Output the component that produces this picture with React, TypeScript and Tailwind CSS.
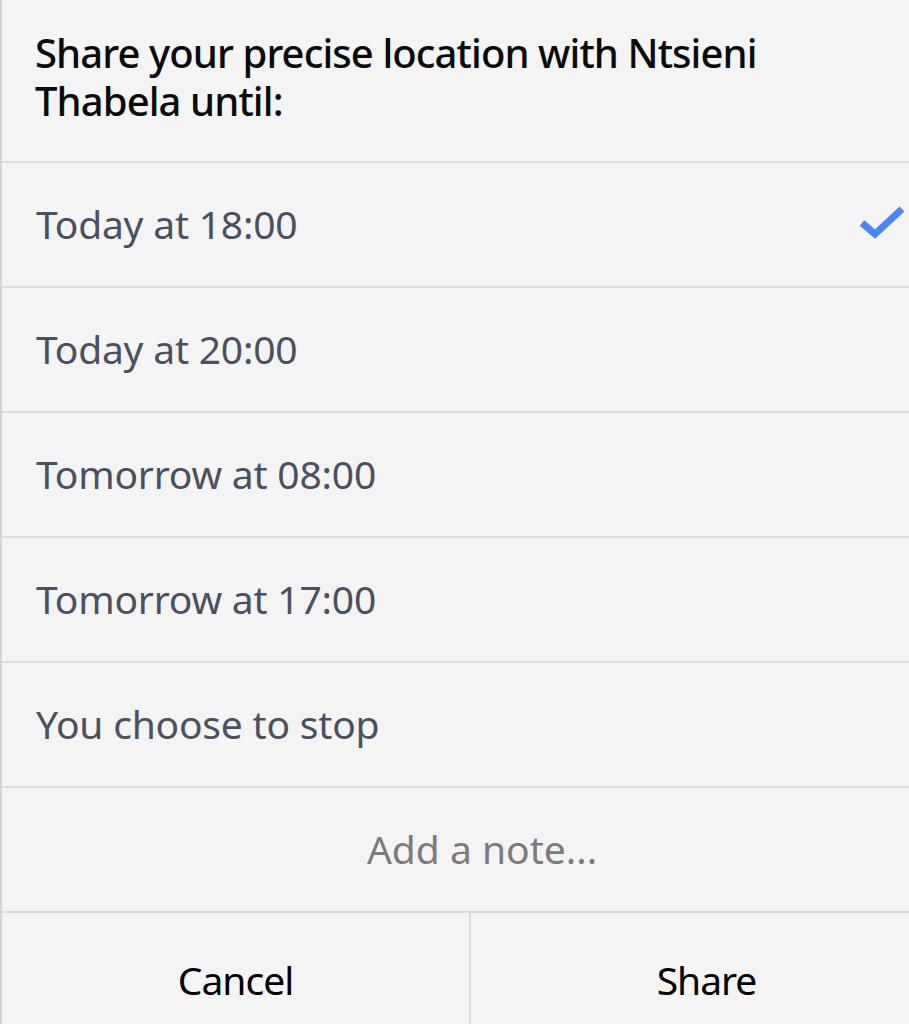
const options = [
  "Today at 18:00",
  "Today at 20:00",
  "Tomorrow at 08:00",
  "Tomorrow at 17:00",
  "You choose to stop",
];

export default function App() {
  const selected = 0;
  return (
    <div className="w-[909px] h-[1024px] overflow-hidden bg-[#f4f4f4]">
      <div
        className="w-[942px] h-[1024px] flex flex-col border-l-2 border-[#d4d4d4] bg-[#f4f4f4]"
        style={{ fontFamily: '"Noto Sans", "Open Sans", sans-serif' }}
      >
        <div className="h-[161px] px-[33px] pt-[29px]">
          <h1 className="text-[40px] leading-[48px] font-medium text-[#0b0b0b] tracking-[-0.9px]">
            Share your precise location with Ntsieni
            <br />
            Thabela until:
          </h1>
        </div>
        {options.map((opt, i) => (
          <div
            key={opt}
            className="h-[125px] border-t-2 border-[#dcdcdc] flex items-center justify-between pl-[34px] pr-[36px]"
          >
            <span className="text-[39px] text-[#4b5060] tracking-[-0.2px]">{opt}</span>
            {i === selected && (
              <svg width="48" height="40" viewBox="0 0 48 40" className="mt-[-4px]">
                <path
                  d="M4 20 L17 31 L44 6"
                  fill="none"
                  stroke="#4a87f0"
                  strokeWidth="7"
                  strokeLinejoin="miter"
                />
              </svg>
            )}
          </div>
        ))}
        <div className="h-[125px] border-t-2 border-[#dcdcdc] flex items-center justify-center pl-[20px]">
          <span className="text-[39px] text-[#7b7b7b]">Add a note...</span>
        </div>
        <div className="flex-1 border-t-2 border-[#dcdcdc] flex">
          <button className="w-[469px] border-r-2 border-[#dcdcdc] flex items-center justify-center pt-[24px] text-[39px] text-black tracking-[-1px]">
            Cancel
          </button>
          <button className="flex-1 flex items-center justify-center pt-[24px] text-[39px] text-black tracking-[-1px]">
            Share
          </button>
        </div>
      </div>
    </div>
  );
}
